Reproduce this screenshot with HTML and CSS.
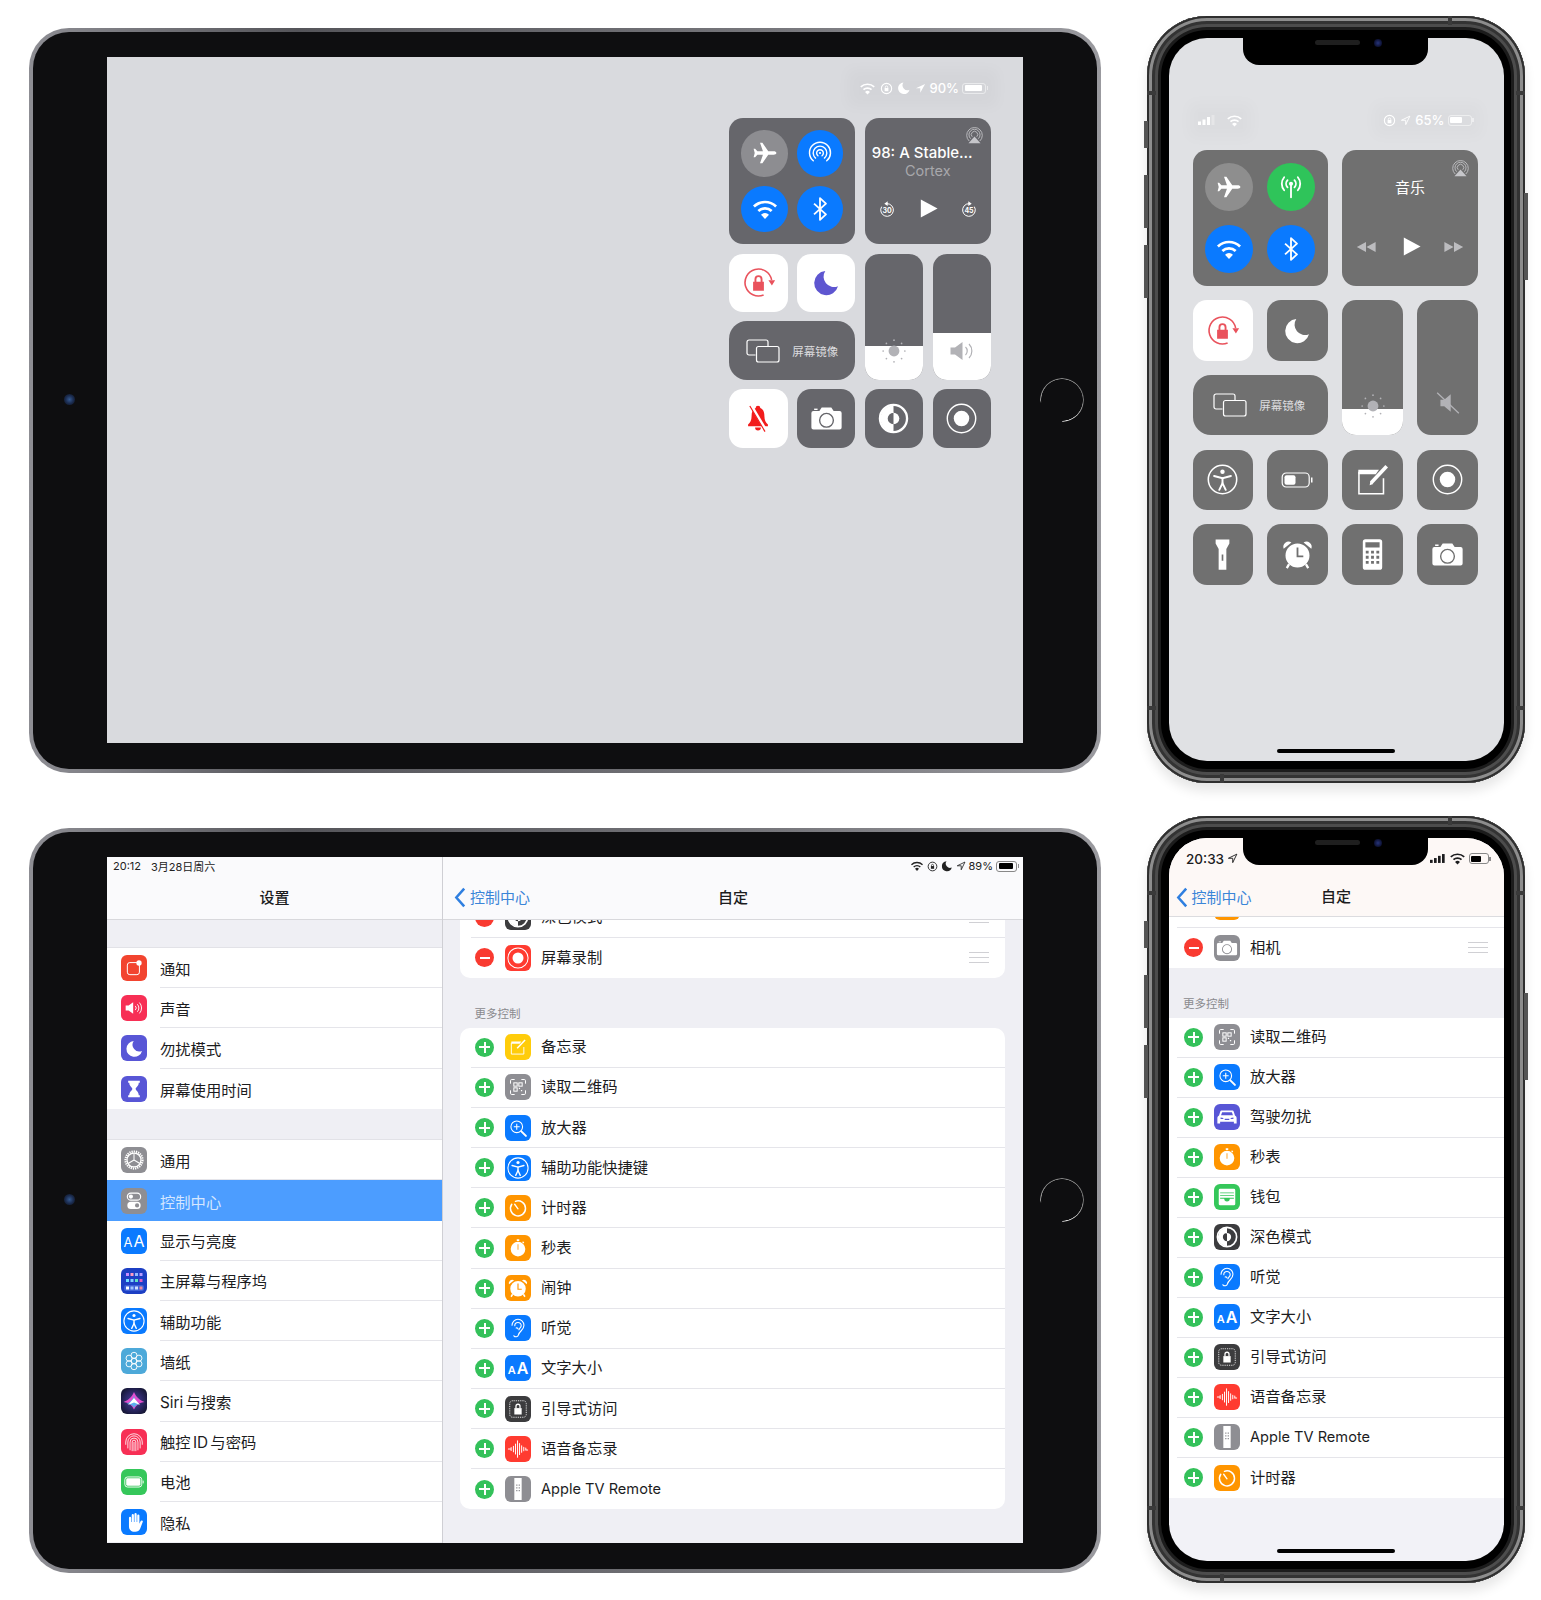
FILE: index.html
```html
<!DOCTYPE html>
<html lang="zh-CN">
<head>
  <meta charset="UTF-8">
  <meta name="viewport" content="width=device-width, initial-scale=1.0">
  <title>控制中心</title>
  <link rel="stylesheet" href="styles.css">
</head>

<body>
  <svg class="sprite" xmlns="http://www.w3.org/2000/svg">
    <symbol id="i-plane" viewBox="0 0 24 24"><path fill="currentColor" d="M22.5 12c0-1-1.2-1.6-2.5-1.6h-5L9.6 2.5H7.4l2.7 7.9H5L2.900 8H1.500l1 4-1 4h1.400L5 13.600h5.100l-2.700 7.900h2.200l5.400-7.900h5c1.300 0 2.500-.6 2.500-1.600z"/></symbol>
    <symbol id="i-airdrop" viewBox="0 0 24 24"><g fill="none" stroke="currentColor" stroke-width="1.300" stroke-linecap="round"><path d="M5.800 19.200A9.700 9.700 0 1 1 18.200 19.200"/><path d="M7.900 16.700A6.300 6.300 0 1 1 16.100 16.700"/><path d="M10.100 14.500A3.100 3.100 0 1 1 13.900 14.500"/></g><circle cx="12" cy="12" r="1" fill="currentColor"/></symbol>
    <symbol id="i-wifi" viewBox="0 0 24 24"><g fill="none" stroke="currentColor" stroke-width="2.300"><path d="M2.500 9.800a13.800 13.800 0 0 1 19 0"/><path d="M6.300 13.700a8.300 8.300 0 0 1 11.400 0"/></g><path fill="currentColor" d="M12 20.500l-3.400-3.600a4.800 4.800 0 0 1 6.800 0z"/></symbol>
    <symbol id="i-bt" viewBox="0 0 24 24"><path fill="none" stroke="currentColor" stroke-width="1.700" stroke-linejoin="round" d="M6.500 7l11 10L12 22V2l5.500 5-11 10"/></symbol>
    <symbol id="i-cell" viewBox="0 0 24 24"><g fill="none" stroke="currentColor" stroke-width="1.700" stroke-linecap="round"><path d="M12 9v12.500"/><path d="M8.800 5.700a4.800 4.800 0 0 0 0 6.600"/><path d="M15.200 5.700a4.800 4.800 0 0 1 0 6.600"/><path d="M5.700 3a9.300 9.300 0 0 0 0 12"/><path d="M18.300 3a9.300 9.300 0 0 1 0 12"/></g><circle cx="12" cy="9" r="1.900" fill="currentColor"/></symbol>
    <symbol id="i-airplay" viewBox="0 0 24 24"><g fill="none" stroke="currentColor" stroke-width="1.200"><path d="M4.500 19.800a11 11 0 1 1 15 0"/><path d="M6.500 16.500a7.800 7.800 0 1 1 11 0"/><path d="M8.800 13.800a4.500 4.500 0 1 1 6.400 0"/></g><path fill="currentColor" d="M12 13.500l8.500 9.500h-17z"/></symbol>
    <symbol id="i-play" viewBox="0 0 24 24"><path fill="currentColor" d="M5 2.500L22.500 12 5 21.500z"/></symbol>
    <symbol id="i-rw" viewBox="0 0 24 24"><path fill="currentColor" d="M12 6.500v11L2 12zM22.500 6.500v11L12.500 12z"/></symbol>
    <symbol id="i-ff" viewBox="0 0 24 24"><path fill="currentColor" d="M1.500 6.500v11l10-5.500zM12 6.500v11l10-5.500z"/></symbol>
    <symbol id="i-back30" viewBox="0 0 24 24"><path fill="none" stroke="currentColor" stroke-width="1.500" d="M12 4a9.500 9.500 0 1 1-8 4.500"/><path fill="currentColor" d="M13 .5v7L8 4z"/></symbol>
    <symbol id="i-fwd45" viewBox="0 0 24 24"><path fill="none" stroke="currentColor" stroke-width="1.500" d="M12 4a9.500 9.500 0 1 0 8 4.500"/><path fill="currentColor" d="M11 .5v7L16 4z"/></symbol>
    <symbol id="i-rotlock" viewBox="0 0 24 24"><path fill="none" stroke="currentColor" stroke-width="1.100" d="M21 10.300A9.200 9.200 0 1 0 15.500 20.500"/><path fill="currentColor" d="M18.800 10.500h4.600L21.200 14zM8.300 11.500h7.400v6.200H8.300z"/><path fill="none" stroke="currentColor" stroke-width="1.300" d="M9.900 11.800V9.700a2.100 2.100 0 0 1 4.200 0v2.100"/></symbol>
    <symbol id="i-moon" viewBox="0 0 24 24"><path fill="currentColor" d="M11 2.500A10 10 0 1 0 21.500 15 8.500 8.500 0 0 1 11 2.500z"/></symbol>
    <symbol id="i-mirror" viewBox="0 0 34 24"><g fill="none" stroke="currentColor" stroke-width="1.200"><path d="M9.500 16H3a2 2 0 0 1-2-2V3a2 2 0 0 1 2-2h17a2 2 0 0 1 2 2v4.500"/><rect x="10.500" y="7.500" width="22.500" height="15.500" rx="2"/></g></symbol>
    <symbol id="i-sun" viewBox="0 0 24 24"><circle cx="12" cy="12" r="5" fill="currentColor"/><g fill="currentColor"><circle cx="12" cy="2" r=".8"/><circle cx="12" cy="22" r=".8"/><circle cx="2" cy="12" r=".8"/><circle cx="22" cy="12" r=".8"/><circle cx="5" cy="5" r=".8"/><circle cx="19" cy="5" r=".8"/><circle cx="5" cy="19" r=".8"/><circle cx="19" cy="19" r=".8"/></g></symbol>
    <symbol id="i-vol" viewBox="0 0 28 20"><path fill="currentColor" d="M0 6.500h4.500L12 1v18l-7.500-5.500H0z"/><g fill="none" stroke="currentColor" stroke-width="1.200"><path d="M15 6a5.500 5.500 0 0 1 0 8"/><path d="M18.500 3a10 10 0 0 1 0 14"/></g></symbol>
    <symbol id="i-mute" viewBox="0 0 24 24"><path fill="currentColor" d="M5 9h3.500l6-5v16l-6-5H5z"/><path fill="none" stroke="currentColor" stroke-width="1.200" d="M2 2.500l20 19"/></symbol>
    <symbol id="i-bell" viewBox="0 0 24 24"><path fill="currentColor" d="M12 1.500a2 2 0 0 0-2 2C7.500 4.500 6.500 7 6.500 10.500c0 3.500-1.200 5.500-3 7V19h17v-1.500c-1.800-1.500-3-3.500-3-7 0-3.500-1-6-3.500-7a2 2 0 0 0-2-2zM9.500 20.200a2.500 2.500 0 0 0 5 0z"/><path fill="none" stroke="#fff" stroke-width="2.600" d="M6 1l13 22"/><path fill="none" stroke="currentColor" stroke-width="1" d="M5 1.700l13 22"/></symbol>
    <symbol id="i-camera" viewBox="0 0 24 24"><path fill="currentColor" fill-rule="evenodd" d="M2.500 6.500h4.300L8.500 4h7l1.700 2.500h4.300a1.500 1.500 0 0 1 1.500 1.500v10.500a1.500 1.500 0 0 1-1.500 1.500h-19A1.500 1.500 0 0 1 1 18.500V8a1.500 1.500 0 0 1 1.500-1.500zM12 7.800a5.500 5.500 0 1 0 0 11 5.500 5.500 0 0 0 0-11zM12 8.800a4.500 4.500 0 1 1 0 9 4.500 4.500 0 0 1 0-9z"/><path fill="currentColor" d="M3 4.800h2.500v1H3z"/></symbol>
    <symbol id="i-contrast" viewBox="0 0 24 24"><circle cx="12" cy="12" r="10.500" fill="none" stroke="currentColor" stroke-width="1.800"/><path fill="currentColor" fill-rule="evenodd" d="M12 2a10 10 0 0 0 0 20zM12 7.500a4.500 4.500 0 0 0 0 9z"/><path fill="currentColor" d="M12 7.500a4.500 4.500 0 0 1 0 9z"/></symbol>
    <symbol id="i-record" viewBox="0 0 24 24"><circle cx="12" cy="12" r="11" fill="none" stroke="currentColor" stroke-width="1.100"/><circle cx="12" cy="12" r="6" fill="currentColor"/></symbol>
    <symbol id="i-access" viewBox="0 0 24 24"><circle cx="12" cy="12" r="11" fill="none" stroke="currentColor" stroke-width="1.200"/><circle cx="12" cy="6" r="1.700" fill="currentColor"/><g fill="none" stroke="currentColor" stroke-width="1.500" stroke-linecap="round"><path d="M5.500 9.300L12 11l6.500-1.700"/><path d="M12 11v3.800"/><path d="M9.500 20l2.500-5.200 2.500 5.200"/></g></symbol>
    <symbol id="i-lowbat" viewBox="0 0 32 16"><rect x=".7" y="1" width="27" height="14" rx="4" fill="none" stroke="currentColor" stroke-width="1.200"/><rect x="3" y="3.200" width="11" height="9.600" rx="2" fill="currentColor"/><rect x="29.500" y="5.500" width="1.500" height="5" fill="currentColor"/></symbol>
    <symbol id="i-note" viewBox="0 0 24 24"><path fill="none" stroke="currentColor" stroke-width="1.200" d="M1.500 6v17h19V11"/><path fill="currentColor" d="M1 4.500h16L14.500 8H1z"/><path fill="none" stroke="currentColor" stroke-width="2.800" d="M23 1.800L11 14.500"/><path fill="currentColor" d="M9.800 16.500l.5-3 2.300 2z"/></symbol>
    <symbol id="i-flash" viewBox="0 0 24 24"><path fill="currentColor" fill-rule="evenodd" d="M7 1h10v3l-2.200 4v15H9.200V8L7 4zM11.400 12v4.500h1.200V12z"/></symbol>
    <symbol id="i-alarm" viewBox="0 0 24 24"><path fill="currentColor" fill-rule="evenodd" d="M12 3.500a9.300 9.300 0 1 0 0 18.600 9.300 9.300 0 0 0 0-18.600zM11.300 6.500h1.400v6.300h3.800v1.400h-5.200z"/><path fill="currentColor" d="M1.300 7.500a4 4 0 0 1 6-4.700zM22.700 7.500a4 4 0 0 0-6-4.700z"/><path fill="none" stroke="currentColor" stroke-width="1.800" d="M5.500 19.500l-1.800 3M18.500 19.500l1.800 3"/></symbol>
    <symbol id="i-calc" viewBox="0 0 24 24"><path fill="currentColor" fill-rule="evenodd" d="M4.500 2.200a2 2 0 0 1 2-2h11a2 2 0 0 1 2 2v19.600a2 2 0 0 1-2 2h-11a2 2 0 0 1-2-2zM6.500 2.500V6.500h11V2.500zM6.800 9v2.200h2.200V9zM10.900 9v2.200h2.200V9zM15 9v2.200h2.200V9zM6.800 13v2.200h2.200V13zM10.900 13v2.200h2.200V13zM15 13v2.200h2.200V13zM6.800 17v2.200h2.200V17zM10.900 17v2.200h2.200V17zM15 17v2.200h2.200V17z"/></symbol>
    <symbol id="i-loc" viewBox="0 0 24 24"><path fill="currentColor" d="M22 2L2 11.500h9.500V21z"/></symbol>
    <symbol id="i-loc-line" viewBox="0 0 24 24"><path fill="none" stroke="currentColor" stroke-width="2" stroke-linejoin="round" d="M21.500 2.500L3 11.500h9.500V21z"/></symbol>
    <symbol id="i-lockring" viewBox="0 0 24 24"><circle cx="12" cy="12" r="9.500" fill="none" stroke="currentColor" stroke-width="2"/><path fill="currentColor" d="M8.500 11h7v6h-7z"/><path fill="none" stroke="currentColor" stroke-width="1.500" d="M9.800 11V9.500a2.200 2.200 0 0 1 4.400 0V11"/></symbol>
    <symbol id="a-notif" viewBox="0 0 24 24"><rect x="4" y="5.500" width="14.500" height="14.500" rx="3" fill="none" stroke="currentColor" stroke-width="1.200"/><circle cx="18" cy="6" r="3.200" fill="currentColor"/></symbol>
    <symbol id="a-sound" viewBox="0 0 24 24"><path fill="currentColor" d="M2 9h3.500L11 5v14l-5.500-4H2z"/><g fill="none" stroke="currentColor" stroke-width="1.100"><path d="M13.500 9.500a3.500 3.500 0 0 1 0 5"/><path d="M16 7.500a6.500 6.500 0 0 1 0 9"/><path d="M18.500 5.500a9.500 9.500 0 0 1 0 13"/></g></symbol>
    <symbol id="a-hour" viewBox="0 0 24 24"><path fill="currentColor" d="M5 2h14v2.600h-1.300c0 4.200-3.700 5.600-3.700 7.400s3.700 3.200 3.700 7.400H19V22H5v-2.600h1.300c0-4.200 3.700-5.600 3.700-7.400S6.300 8.800 6.300 4.600H5z"/></symbol>
    <symbol id="a-gear" viewBox="0 0 24 24"><circle cx="12" cy="12" r="9.300" fill="none" stroke="currentColor" stroke-width="2.400" stroke-dasharray="1.400 1"/><circle cx="12" cy="12" r="7.600" fill="none" stroke="currentColor" stroke-width="1.400"/><path fill="none" stroke="currentColor" stroke-width="1.100" d="M12 12V5M12 12l6 3.500M12 12l-6 3.500"/></symbol>
    <symbol id="a-toggle" viewBox="0 0 24 24"><rect x="4" y="2.500" width="16" height="8.500" rx="4.250" fill="none" stroke="currentColor" stroke-width="1.400"/><circle cx="8.300" cy="6.700" r="2.500" fill="currentColor"/><path fill="currentColor" fill-rule="evenodd" d="M8.250 13h7.500a4.250 4.250 0 0 1 0 8.500h-7.500a4.250 4.250 0 0 1 0-8.500zM15.700 14.800a2.500 2.500 0 1 0 0 5 2.500 2.500 0 0 0 0-5z"/></symbol>
    <symbol id="a-dock" viewBox="0 0 26 26"><rect x="5" y="5" width="3" height="3" fill="#c88bff"/><rect x="9.500" y="5" width="3" height="3" fill="#ff9ac0"/><rect x="14" y="5" width="3" height="3" fill="#8fb8ff"/><rect x="18.500" y="5" width="3" height="3" fill="#b99cff"/><rect x="5" y="11" width="3" height="3" fill="#6fe0ff"/><rect x="9.500" y="11" width="3" height="3" fill="#7fd0ff"/><rect x="14" y="11" width="3" height="3" fill="#5fe0c0"/><rect x="18.500" y="11" width="3" height="3" fill="#e060c0"/><rect x="3" y="17" width="20" height="6" rx="2" fill="#3e62d8"/><rect x="5" y="18.500" width="3" height="3" fill="#fff"/><rect x="9.500" y="18.500" width="3" height="3" fill="#9fc4ff"/><rect x="14" y="18.500" width="3" height="3" fill="#d0e0ff"/><rect x="18.500" y="18.500" width="3" height="3" fill="#f08aa0"/></symbol>
    <symbol id="a-flower" viewBox="0 0 24 24"><g fill="none" stroke="currentColor" stroke-width="1"><circle cx="12" cy="12" r="3"/><circle cx="12" cy="5.800" r="3.300"/><circle cx="12" cy="18.200" r="3.300"/><circle cx="6.600" cy="8.900" r="3.300"/><circle cx="17.400" cy="8.900" r="3.300"/><circle cx="6.600" cy="15.100" r="3.300"/><circle cx="17.400" cy="15.100" r="3.300"/></g></symbol>
    <symbol id="a-siri" viewBox="0 0 26 26"><path fill="#e14fd0" d="M13 4c2 5 6 8.500 10.500 10-5 .5-8.500 3-10.500 7.500C11 17 7.500 14.500 2.500 14 7 12.500 11 9 13 4z"/><path fill="#38c6f4" d="M13 8c-1.500 4-4 6.500-7.500 7.500 3.200.2 5.700 1.500 7.500 4 1.800-2.500 3.500-3 5-3.500-2.500-1.500-4-4-5-8z" opacity=".8"/><path fill="#fff" d="M13 10l-6 7 6-2.500 6 2.500z"/></symbol>
    <symbol id="a-finger" viewBox="0 0 24 24"><g fill="none" stroke="currentColor" stroke-width=".9"><path d="M3 15V12a9 9 0 0 1 18 0v3"/><path d="M5.300 19V12a6.700 6.700 0 0 1 13.400 0v7"/><path d="M7.700 21V12a4.300 4.300 0 0 1 8.600 0v9"/><path d="M10 22V12a2 2 0 0 1 4 0v10"/><path d="M12 12v10"/></g></symbol>
    <symbol id="a-bat" viewBox="0 0 24 24"><rect x="2" y="6.500" width="18.500" height="11" rx="3" fill="none" stroke="currentColor" stroke-width="1"/><rect x="3.500" y="8" width="15.500" height="8" rx="1.500" fill="currentColor"/><rect x="21.500" y="10.500" width="1" height="3" fill="currentColor"/></symbol>
    <symbol id="a-hand" viewBox="0 0 24 24"><path fill="currentColor" d="M6.500 7.500a1.200 1.200 0 0 1 2.400 0V12h.6V4.500a1.200 1.200 0 0 1 2.400 0V12h.6V3.500a1.200 1.200 0 0 1 2.400 0V12h.6V5a1.200 1.200 0 0 1 2.400 0v9l1.400-3a1.200 1.200 0 0 1 2.200 1l-2.700 7c-1 2.500-3 3.500-5.300 3.500h-1c-3.500 0-6-2-6-6z"/></symbol>
    <symbol id="a-qr" viewBox="0 0 24 24"><g fill="none" stroke="currentColor" stroke-width="1.200"><path d="M3 8V4.500A1.500 1.500 0 0 1 4.500 3H8M16 3h3.500A1.500 1.500 0 0 1 21 4.500V8M21 16v3.500a1.500 1.500 0 0 1-1.500 1.500H16M8 21H4.500A1.500 1.500 0 0 1 3 19.500V16"/><rect x="7" y="7" width="4" height="4"/><rect x="13" y="7" width="4" height="4"/><rect x="7" y="13" width="4" height="4"/></g><path fill="currentColor" d="M13 13h1.500v1.500H13zM15.500 15.500H17V17h-1.500z"/></symbol>
    <symbol id="a-mag" viewBox="0 0 24 24"><g fill="none" stroke="currentColor" stroke-width="1.300"><circle cx="10.500" cy="10.500" r="7"/><path d="M10.500 7v7M7 10.500h7"/></g><path fill="none" stroke="currentColor" stroke-width="2.400" stroke-linecap="round" d="M16 16l5.500 5.500"/></symbol>
    <symbol id="a-timer" viewBox="0 0 24 24"><g fill="none" stroke="currentColor" stroke-width="1.800" stroke-linecap="round"><path d="M9 4a9 9 0 1 1-4.500 3.500"/><path d="M12 13L8 7.500" stroke-width="1.600"/></g></symbol>
    <symbol id="a-stop" viewBox="0 0 24 24"><path fill="currentColor" fill-rule="evenodd" d="M12 4.500a8.800 8.800 0 1 0 0 17.600 8.800 8.800 0 0 0 0-17.600zM11.500 7.500h1v6.500h-1z"/><path fill="currentColor" d="M10.500 1.500h3v2h-3zM18 4l1.500 1.500-1 1-1.500-1.500z"/></symbol>
    <symbol id="a-ear" viewBox="0 0 24 24"><g fill="none" stroke="currentColor" stroke-width="1.200" stroke-linecap="round"><path d="M7.500 20.500c1.500 1.800 4.500 1.300 5-1 .5-2 1.500-3 3-4.500 2-2 3-3.500 3-6a6.500 6.500 0 0 0-13 0"/><path d="M8.500 9.500a3.500 3.500 0 0 1 7 0c0 2-2 2.500-2.500 4.500"/><path d="M10 12a1.500 1.500 0 0 1 2 1"/></g></symbol>
    <symbol id="a-guided" viewBox="0 0 24 24"><rect x="3" y="3" width="18" height="18" rx="3" fill="none" stroke="currentColor" stroke-width="1" stroke-dasharray="1 1"/><path fill="currentColor" d="M8 11h8v7H8z"/><path fill="none" stroke="currentColor" stroke-width="1.400" d="M9.800 11V9a2.200 2.200 0 0 1 4.400 0v2"/></symbol>
    <symbol id="a-wave" viewBox="0 0 24 24"><path fill="none" stroke="currentColor" stroke-width="1.100" stroke-linecap="round" d="M1.500 12h2M4.500 10.500v3M7 9v6M9.300 6.500v11M11.500 3v18M13.700 6v12M16 8.500v7M18.300 10v4M20.500 11v2h2"/></symbol>
    <symbol id="a-remote" viewBox="0 0 24 24"><path fill="currentColor" fill-rule="evenodd" d="M8 0h8v24H8zM10 7v1.400h1.400V7zM12.700 7v1.400h1.400V7zM10 10v1.400h1.400V10zM12.700 10v1.400h1.400V10zM10 13v1.400h1.400V13zM12.700 13v1.400h1.400V13z"/></symbol>
    <symbol id="a-car" viewBox="0 0 24 24"><path fill="currentColor" fill-rule="evenodd" d="M6.500 5h11c1 0 1.700.5 2 1.500l1.200 3.800c1 .5 1.800 1.400 1.800 2.700V19h-3v-1.700H4.500V19h-3v-6c0-1.300.8-2.200 1.800-2.700l1.200-3.800C4.800 5.500 5.500 5 6.500 5zM6.700 6.700L5.500 10h13l-1.200-3.300zM5 12.500v1.700h3v-1zM19 12.500l-3 .7v1h3zM9.500 14v1.200h5V14z"/></symbol>
    <symbol id="a-wallet" viewBox="0 0 24 24"><path fill="currentColor" fill-rule="evenodd" d="M4.500 3h15A1.500 1.500 0 0 1 21 4.500v15a1.500 1.500 0 0 1-1.500 1.500h-15A1.500 1.500 0 0 1 3 19.500v-15A1.500 1.500 0 0 1 4.500 3zM4.500 7v1h15V7zM4.500 10v.8h15V10zM4.500 12.800V14H9a3 3 0 0 0 6 0h4.500v-1.200z"/></symbol>
    <symbol id="a-note" viewBox="0 0 24 24"><path fill="none" stroke="currentColor" stroke-width="1.100" d="M4 7v13.500h15V12"/><path fill="currentColor" d="M4 5.500h12L14 8H4z"/><path fill="none" stroke="currentColor" stroke-width="1.800" d="M20.500 3.500L11 13.500"/></symbol>
  </svg>

  <main class="gallery">
    <section class="ipad">
      <span class="ipad-cam"></span>
      <span class="ipad-home"></span>
      <div class="screen-cc">
        <div class="cc-status cc-status-pad">
          <svg class="st-wifi"><use href="#i-wifi"/></svg>
          <svg class="st-lock"><use href="#i-lockring"/></svg>
          <svg class="st-moon"><use href="#i-moon"/></svg>
          <svg class="st-loc"><use href="#i-loc"/></svg>
          <span class="st-pct">90%</span>
          <span class="batt batt-cc"><i style="width: 90%"></i></span>
        </div>
        <div class="cc-grid">
          <div class="conn">
            <span class="round round-off"><svg><use href="#i-plane"/></svg></span>
            <span class="round round-blue"><svg><use href="#i-airdrop"/></svg></span>
            <span class="round round-blue"><svg class="ic-wifi"><use href="#i-wifi"/></svg></span>
            <span class="round round-blue"><svg><use href="#i-bt"/></svg></span>
          </div>
          <div class="media">
            <svg class="airplay"><use href="#i-airplay"/></svg>
            <div class="media-title">98: A Stable...</div>
            <div class="media-sub">Cortex</div>
            <div class="media-ctl">
              <svg class="skip" viewBox="0 0 24 24"><use href="#i-back30"/><text x="12" y="17.500" class="skip-n">30</text></svg>
              <svg class="play"><use href="#i-play"/></svg>
              <svg class="skip" viewBox="0 0 24 24"><use href="#i-fwd45"/><text x="12" y="17.500" class="skip-n">45</text></svg>
            </div>
          </div>
          <div class="tile tile-on tile-red"><svg class="ic-rot"><use href="#i-rotlock"/></svg></div>
          <div class="tile tile-on tile-violet"><svg class="ic-moon"><use href="#i-moon"/></svg></div>
          <div class="slider">
            <i class="slider-fill" style="height: 34px"></i>
            <svg class="slider-sun"><use href="#i-sun"/></svg>
          </div>
          <div class="slider">
            <i class="slider-fill" style="height: 47px"></i>
            <svg class="slider-vol"><use href="#i-vol"/></svg>
          </div>
          <div class="tile mirror"><svg><use href="#i-mirror"/></svg><span>屏幕镜像</span></div>
          <div class="tile tile-on tile-bell"><svg class="ic-bell"><use href="#i-bell"/></svg></div>
          <div class="tile"><svg class="ic-cam"><use href="#i-camera"/></svg></div>
          <div class="tile"><svg class="ic-30"><use href="#i-contrast"/></svg></div>
          <div class="tile"><svg class="ic-30"><use href="#i-record"/></svg></div>
        </div>
      </div>
    </section>

    <section class="iphone">
      <span class="side side-mute"></span><span class="side side-up"></span><span class="side side-down"></span><span class="side side-power"></span>
      <span class="seam seam-top"></span><span class="seam seam-lt"></span><span class="seam seam-rt"></span><span class="seam seam-lb"></span><span class="seam seam-rb"></span><span class="seam seam-bottom"></span>
      <div class="phone-screen phone-cc">
        <div class="notch"><span class="speaker"></span><span class="lens"></span></div>
        <div class="cc-status phone-status">
          <div class="phone-status-l">
            <svg class="signal" viewBox="0 0 18 10"><rect x="0" y="6.500" width="3" height="3.500" fill="#fff"/><rect x="4.500" y="4.500" width="3" height="5.500" fill="#fff"/><rect x="9" y="2" width="3" height="8" fill="#fff"/><rect x="13.500" y="0" width="3" height="10" fill="#fff" opacity=".3"/></svg>
            <svg class="st-wifi"><use href="#i-wifi"/></svg>
          </div>
          <div class="phone-status-r">
            <svg class="st-lock"><use href="#i-lockring"/></svg>
            <svg class="st-loc"><use href="#i-loc-line"/></svg>
            <span class="st-pct">65%</span>
            <span class="batt batt-cc"><i style="width: 65%"></i></span>
          </div>
        </div>
        <div class="cc-grid cc-grid-phone">
          <div class="conn">
            <span class="round round-off"><svg><use href="#i-plane"/></svg></span>
            <span class="round round-green"><svg><use href="#i-cell"/></svg></span>
            <span class="round round-blue"><svg class="ic-wifi"><use href="#i-wifi"/></svg></span>
            <span class="round round-blue"><svg><use href="#i-bt"/></svg></span>
          </div>
          <div class="media media-phone">
            <svg class="airplay"><use href="#i-airplay"/></svg>
            <div class="media-head">音乐</div>
            <div class="media-ctl">
              <svg class="seek"><use href="#i-rw"/></svg>
              <svg class="play"><use href="#i-play"/></svg>
              <svg class="seek"><use href="#i-ff"/></svg>
            </div>
          </div>
          <div class="tile tile-on tile-red"><svg class="ic-rot"><use href="#i-rotlock"/></svg></div>
          <div class="tile"><svg class="ic-moon"><use href="#i-moon"/></svg></div>
          <div class="slider">
            <i class="slider-fill" style="height: 26px"></i>
            <svg class="slider-sun"><use href="#i-sun"/></svg>
          </div>
          <div class="slider">
            <svg class="slider-mute"><use href="#i-mute"/></svg>
          </div>
          <div class="tile mirror"><svg><use href="#i-mirror"/></svg><span>屏幕镜像</span></div>
          <div class="tile"><svg class="ic-30"><use href="#i-access"/></svg></div>
          <div class="tile"><svg class="ic-lowbat"><use href="#i-lowbat"/></svg></div>
          <div class="tile"><svg class="ic-30"><use href="#i-note"/></svg></div>
          <div class="tile"><svg class="ic-30"><use href="#i-record"/></svg></div>
          <div class="tile"><svg class="ic-32"><use href="#i-flash"/></svg></div>
          <div class="tile"><svg class="ic-30"><use href="#i-alarm"/></svg></div>
          <div class="tile"><svg class="ic-30"><use href="#i-calc"/></svg></div>
          <div class="tile"><svg class="ic-cam"><use href="#i-camera"/></svg></div>
        </div>
        <span class="home-bar"></span>
      </div>
    </section>

    <section class="ipad">
      <span class="ipad-cam"></span>
      <span class="ipad-home"></span>
      <div class="screen-split">
        <aside class="master">
          <header class="nav">
            <div class="nav-status"><span>20:12</span><span>3月28日周六</span></div>
            <div class="nav-bar"><span class="nav-title">设置</span></div>
          </header>
          <div class="master-list">
            <ul class="group">
              <li class="item"><span class="app c-notif"><svg><use href="#a-notif"/></svg></span><span class="item-label">通知</span></li>
              <li class="item"><span class="app c-pink"><svg><use href="#a-sound"/></svg></span><span class="item-label">声音</span></li>
              <li class="item"><span class="app c-indigo"><svg class="app-moon"><use href="#i-moon"/></svg></span><span class="item-label">勿扰模式</span></li>
              <li class="item"><span class="app c-indigo"><svg><use href="#a-hour"/></svg></span><span class="item-label">屏幕使用时间</span></li>
            </ul>
            <ul class="group">
              <li class="item"><span class="app c-gray"><svg class="app-lg"><use href="#a-gear"/></svg></span><span class="item-label">通用</span></li>
              <li class="item item-active"><span class="app c-gray"><svg><use href="#a-toggle"/></svg></span><span class="item-label">控制中心</span></li>
              <li class="item"><span class="app c-blue"><span class="aa aa-thin"><small>A</small>A</span></span><span class="item-label">显示与亮度</span></li>
              <li class="item"><span class="app c-dock"><svg class="app-full"><use href="#a-dock"/></svg></span><span class="item-label">主屏幕与程序坞</span></li>
              <li class="item"><span class="app c-blue"><svg class="app-lg"><use href="#i-access"/></svg></span><span class="item-label">辅助功能</span></li>
              <li class="item"><span class="app c-sky"><svg class="app-lg"><use href="#a-flower"/></svg></span><span class="item-label">墙纸</span></li>
              <li class="item"><span class="app c-siri"><svg class="app-full"><use href="#a-siri"/></svg></span><span class="item-label">Siri 与搜索</span></li>
              <li class="item"><span class="app c-pink"><svg class="app-lg"><use href="#a-finger"/></svg></span><span class="item-label">触控 ID 与密码</span></li>
              <li class="item"><span class="app c-green"><svg class="app-lg"><use href="#a-bat"/></svg></span><span class="item-label">电池</span></li>
              <li class="item"><span class="app c-blue"><svg class="app-lg"><use href="#a-hand"/></svg></span><span class="item-label">隐私</span></li>
            </ul>
          </div>
        </aside>
        <div class="detail">
          <header class="nav">
            <div class="nav-status nav-status-r">
              <svg class="st-wifi"><use href="#i-wifi"/></svg>
              <svg class="st-lock"><use href="#i-lockring"/></svg>
              <svg class="st-moon"><use href="#i-moon"/></svg>
              <svg class="st-loc"><use href="#i-loc-line"/></svg>
              <span>89%</span>
              <span class="batt batt-dark"><i style="width: 89%"></i></span>
            </div>
            <div class="nav-bar">
              <a class="back"><svg viewBox="0 0 11 20"><path d="M9.500 1.500L2 10l7.500 8.500"/></svg>控制中心</a>
              <span class="nav-title">自定</span>
            </div>
          </header>
          <div class="detail-list">
            <ul class="card card-clip">
              <li class="row"><span class="ctl ctl-del"></span><span class="app c-dark"><svg class="app-lg"><use href="#i-contrast"/></svg></span><span class="row-label">深色模式</span><span class="grip"></span></li>
              <li class="row"><span class="ctl ctl-del"></span><span class="app c-red"><svg class="app-lg"><use href="#i-record"/></svg></span><span class="row-label">屏幕录制</span><span class="grip"></span></li>
            </ul>
            <h2 class="more">更多控制</h2>
            <ul class="card">
              <li class="row"><span class="ctl ctl-add"></span><span class="app c-yellow"><svg><use href="#a-note"/></svg></span><span class="row-label">备忘录</span></li>
              <li class="row"><span class="ctl ctl-add"></span><span class="app c-gray"><svg><use href="#a-qr"/></svg></span><span class="row-label">读取二维码</span></li>
              <li class="row"><span class="ctl ctl-add"></span><span class="app c-blue"><svg><use href="#a-mag"/></svg></span><span class="row-label">放大器</span></li>
              <li class="row"><span class="ctl ctl-add"></span><span class="app c-blue"><svg class="app-lg"><use href="#i-access"/></svg></span><span class="row-label">辅助功能快捷键</span></li>
              <li class="row"><span class="ctl ctl-add"></span><span class="app c-orange"><svg><use href="#a-timer"/></svg></span><span class="row-label">计时器</span></li>
              <li class="row"><span class="ctl ctl-add"></span><span class="app c-orange"><svg><use href="#a-stop"/></svg></span><span class="row-label">秒表</span></li>
              <li class="row"><span class="ctl ctl-add"></span><span class="app c-orange"><svg><use href="#i-alarm"/></svg></span><span class="row-label">闹钟</span></li>
              <li class="row"><span class="ctl ctl-add"></span><span class="app c-blue"><svg class="app-lg"><use href="#a-ear"/></svg></span><span class="row-label">听觉</span></li>
              <li class="row"><span class="ctl ctl-add"></span><span class="app c-blue"><span class="aa"><small>A</small>A</span></span><span class="row-label">文字大小</span></li>
              <li class="row"><span class="ctl ctl-add"></span><span class="app c-dark"><svg class="app-lg"><use href="#a-guided"/></svg></span><span class="row-label">引导式访问</span></li>
              <li class="row"><span class="ctl ctl-add"></span><span class="app c-red"><svg class="app-lg"><use href="#a-wave"/></svg></span><span class="row-label">语音备忘录</span></li>
              <li class="row"><span class="ctl ctl-add"></span><span class="app c-gray"><svg class="app-lg"><use href="#a-remote"/></svg></span><span class="row-label latin">Apple TV Remote</span></li>
            </ul>
          </div>
        </div>
      </div>
    </section>

    <section class="iphone">
      <span class="side side-mute"></span><span class="side side-up"></span><span class="side side-down"></span><span class="side side-power"></span>
      <span class="seam seam-top"></span><span class="seam seam-lt"></span><span class="seam seam-rt"></span><span class="seam seam-lb"></span><span class="seam seam-rb"></span><span class="seam seam-bottom"></span>
      <div class="phone-screen phone-settings">
        <div class="notch"><span class="speaker"></span><span class="lens"></span></div>
        <header class="nav nav-phone">
          <div class="phone-bar">
            <div class="phone-time"><span>20:33</span><svg class="st-loc"><use href="#i-loc-line"/></svg></div>
            <div class="phone-icons">
              <svg class="signal" viewBox="0 0 18 10"><rect x="0" y="6.500" width="3" height="3.500"/><rect x="4.500" y="4.500" width="3" height="5.500"/><rect x="9" y="2" width="3" height="8"/><rect x="13.500" y="0" width="3" height="10"/></svg>
              <svg class="st-wifi"><use href="#i-wifi"/></svg>
              <span class="batt batt-dark"><i style="width: 65%"></i></span>
            </div>
          </div>
          <div class="nav-bar">
            <a class="back"><svg viewBox="0 0 11 20"><path d="M9.500 1.500L2 10l7.500 8.500"/></svg>控制中心</a>
            <span class="nav-title">自定</span>
          </div>
        </header>
        <div class="detail-list detail-list-phone">
          <ul class="card card-clip">
            <li class="row"><span class="ctl ctl-del"></span><span class="app c-orange"></span><span class="row-label"></span></li>
            <li class="row"><span class="ctl ctl-del"></span><span class="app c-gray"><svg class="app-lg"><use href="#i-camera"/></svg></span><span class="row-label">相机</span><span class="grip"></span></li>
          </ul>
          <h2 class="more">更多控制</h2>
          <ul class="card">
            <li class="row"><span class="ctl ctl-add"></span><span class="app c-gray"><svg><use href="#a-qr"/></svg></span><span class="row-label">读取二维码</span></li>
            <li class="row"><span class="ctl ctl-add"></span><span class="app c-blue"><svg><use href="#a-mag"/></svg></span><span class="row-label">放大器</span></li>
            <li class="row"><span class="ctl ctl-add"></span><span class="app c-indigo"><svg class="app-lg"><use href="#a-car"/></svg></span><span class="row-label">驾驶勿扰</span></li>
            <li class="row"><span class="ctl ctl-add"></span><span class="app c-orange"><svg><use href="#a-stop"/></svg></span><span class="row-label">秒表</span></li>
            <li class="row"><span class="ctl ctl-add"></span><span class="app c-green"><svg class="app-lg"><use href="#a-wallet"/></svg></span><span class="row-label">钱包</span></li>
            <li class="row"><span class="ctl ctl-add"></span><span class="app c-dark"><svg class="app-lg"><use href="#i-contrast"/></svg></span><span class="row-label">深色模式</span></li>
            <li class="row"><span class="ctl ctl-add"></span><span class="app c-blue"><svg class="app-lg"><use href="#a-ear"/></svg></span><span class="row-label">听觉</span></li>
            <li class="row"><span class="ctl ctl-add"></span><span class="app c-blue"><span class="aa"><small>A</small>A</span></span><span class="row-label">文字大小</span></li>
            <li class="row"><span class="ctl ctl-add"></span><span class="app c-dark"><svg class="app-lg"><use href="#a-guided"/></svg></span><span class="row-label">引导式访问</span></li>
            <li class="row"><span class="ctl ctl-add"></span><span class="app c-red"><svg class="app-lg"><use href="#a-wave"/></svg></span><span class="row-label">语音备忘录</span></li>
            <li class="row"><span class="ctl ctl-add"></span><span class="app c-gray"><svg class="app-lg"><use href="#a-remote"/></svg></span><span class="row-label latin">Apple TV Remote</span></li>
            <li class="row"><span class="ctl ctl-add"></span><span class="app c-orange"><svg><use href="#a-timer"/></svg></span><span class="row-label">计时器</span></li>
          </ul>
        </div>
        <span class="home-bar"></span>
      </div>
    </section>
  </main>
</body>
</html>
```

FILE: styles.css
```css
* {
  box-sizing: border-box;
}
body {
  margin: 0;
  background-color: #fff;
  color: #1c1c1e;
  font-family: Inter, "Noto Sans CJK SC", sans-serif;
}
ul {
  margin: 0;
  padding: 0;
  list-style: none;
}
svg {
  display: block;
  fill: currentColor;
}
.sprite {
  display: none;
}
.gallery {
  width: 1541px;
  height: 1600px;
  overflow: hidden;
  display: grid;
  grid-template-columns: 1118px 1fr;
  grid-auto-rows: 800px;
}

/* iPad body */
.ipad {
  position: relative;
  width: 1072px;
  height: 745px;
  margin: 28px 0 0 29px;
  padding: 25px 74px 26px;
  border: 4px solid transparent;
  border-radius: 40px;
  background:
    linear-gradient(#0e0e10, #0e0e10) padding-box,
    linear-gradient(90deg, #8e8e94, #55555a 25%, #77777c 70%, #9a9a9f) border-box;
}
.ipad-cam {
  position: absolute;
  left: 31px;
  top: 362px;
  width: 11px;
  height: 11px;
  border-radius: 50%;
  background: radial-gradient(circle, #35598f 0, #1b2c50 50%, #0d1018 100%);
}
.ipad-home {
  position: absolute;
  right: 13px;
  top: 346px;
  width: 44px;
  height: 44px;
  border-radius: 50%;
  background: conic-gradient(#8a8a8a 0deg, #6c6c6c 70deg, #8f8f8f 120deg, #e8e8e8 178deg, transparent 180deg, transparent 262deg, #9a9a9a 268deg, #777 320deg, #8a8a8a 360deg);
  -webkit-mask: radial-gradient(circle, transparent 20.5px, #000 21px);
  mask: radial-gradient(circle, transparent 20.5px, #000 21px);
}

/* control center, shared by both devices */
.screen-cc {
  height: 100%;
  padding: 24px 32px 0 0;
  background-color: #d9dade;
  display: flex;
  flex-direction: column;
  align-items: flex-end;
}
.cc-status {
  display: flex;
  align-items: center;
  gap: 4px;
  height: 14px;
  color: #fff;
  background-color: rgba(0, 0, 0, 0.025);
  box-shadow: 0 0 14px 12px rgba(0, 0, 0, 0.025);
}
.cc-status-pad {
  margin-right: 5px;
}
.st-wifi {
  width: 17px;
  height: 17px;
}
.st-lock {
  width: 13px;
  height: 13px;
}
.st-moon {
  width: 14px;
  height: 14px;
}
.st-loc {
  width: 11px;
  height: 11px;
}
.st-pct {
  font-size: 13px;
  font-weight: 500;
  line-height: 14px;
  margin-right: -1px;
}
.batt {
  display: block;
  position: relative;
  width: 21px;
  height: 11px;
  padding: 1.5px;
  border-radius: 3px;
  border: 1px solid currentColor;
}
.batt::after {
  content: "";
  position: absolute;
  right: -3px;
  top: 2.500px;
  width: 1.500px;
  height: 4px;
  background-color: currentColor;
  opacity: 0.5;
}
.batt i {
  display: block;
  height: 100%;
  border-radius: 1px;
  background-color: currentColor;
}
.batt-cc {
  width: 24px;
  border-color: rgba(255, 255, 255, 0.5);
}
.cc-grid {
  display: grid;
  grid-template-columns: repeat(4, 58.5px);
  grid-auto-rows: 58.5px;
  gap: 9.3px;
  margin-top: 23px;
  color: #fff;
}
.cc-grid > * {
  background-color: #66666b;
  border-radius: 14px;
}
.conn {
  grid-column: span 2;
  grid-row: span 2;
  display: grid;
  grid-template-columns: 46.5px 46.5px;
  justify-content: center;
  align-content: center;
  gap: 9px;
}
.round {
  height: 46.500px;
  border-radius: 50%;
  display: flex;
  align-items: center;
  justify-content: center;
}
.round svg {
  width: 26px;
  height: 26px;
}
.round .ic-wifi {
  width: 28px;
  height: 28px;
}
.round-off {
  background-color: #8d8d91;
}
.round-blue {
  background-color: #0a7aff;
}
.round-green {
  background-color: #2fc45a;
}
.media {
  position: relative;
  grid-column: span 2;
  grid-row: span 2;
  padding-top: 26px;
  text-align: center;
}
.airplay {
  position: absolute;
  top: 9px;
  right: 8px;
  width: 17px;
  height: 17px;
  color: #c6c6ca;
}
.media-title {
  padding-left: 7px;
  font-size: 15px;
  font-weight: 500;
  line-height: 18px;
  text-align: left;
  white-space: nowrap;
}
.media-sub {
  font-size: 14.500px;
  line-height: 18px;
  color: #a8a8ac;
}
.media-head {
  font-size: 15px;
  line-height: 22px;
  padding-top: 2px;
}
.media-ctl {
  display: flex;
  align-items: center;
  justify-content: space-between;
  margin-top: 17px;
  padding: 0 14px;
}
.skip {
  width: 16px;
  height: 16px;
  overflow: visible;
}
.skip-n {
  font-size: 10.500px;
  font-weight: 700;
  text-anchor: middle;
}
.play {
  width: 23px;
  height: 23px;
}
.seek {
  width: 22px;
  height: 22px;
  color: #bcbcbf;
}
.tile {
  display: flex;
  align-items: center;
  justify-content: center;
}
.tile-on {
  background-color: #fff !important;
}
.tile-red {
  color: #e9525c;
}
.tile-violet {
  color: #5e56d0;
}
.tile-bell {
  color: #f21c1c;
}
.ic-30 {
  width: 31px;
  height: 31px;
}
.ic-32 {
  width: 33px;
  height: 33px;
}
.ic-rot {
  width: 35px;
  height: 35px;
}
.ic-cam {
  width: 33px;
  height: 33px;
}
.ic-moon {
  width: 29px;
  height: 29px;
}
.ic-bell {
  width: 28px;
  height: 28px;
}
.ic-lowbat {
  width: 33px;
  height: 16px;
}
.mirror {
  grid-column: span 2;
  gap: 12px;
  border-radius: 18px;
}
.mirror svg {
  width: 34px;
  height: 24px;
}
.mirror span {
  font-size: 11.500px;
  color: #dcdcdf;
}
.slider {
  position: relative;
  grid-row: span 2;
  overflow: hidden;
  color: #b2b2b6;
}
.slider-fill {
  position: absolute;
  left: 0;
  right: 0;
  bottom: 0;
  background-color: #fff;
}
.slider-sun {
  position: absolute;
  left: 50%;
  bottom: 16px;
  width: 26px;
  height: 26px;
  margin-left: -13px;
}
.slider-vol {
  position: absolute;
  left: 50%;
  bottom: 19px;
  width: 29px;
  height: 20px;
  margin-left: -12px;
}
.slider-mute {
  position: absolute;
  left: 50%;
  bottom: 19px;
  width: 26px;
  height: 26px;
  margin-left: -13px;
}

/* iPhone body */
.iphone {
  position: relative;
  width: 378px;
  height: 767px;
  margin: 16px 0 0 29px;
  padding: 22px 21.500px;
  border-radius: 60px;
  background-color: #000;
  box-shadow:
    inset 0 0 0 2px #2e2e2e,
    inset 0 0 0 5px #8d8d8d,
    inset 0 0 0 8px #333,
    inset 0 0 0 11px #4c4c4c,
    inset 0 0 0 14px #1c1c1c,
    0 8px 12px rgba(0, 0, 0, 0.1);
}
.side {
  position: absolute;
  width: 4px;
  background-color: #555;
}
.side-mute {
  left: -3.500px;
  top: 105px;
  height: 27px;
}
.side-up {
  left: -3.500px;
  top: 159px;
  height: 53px;
}
.side-down {
  left: -3.500px;
  top: 229px;
  height: 53px;
}
.side-power {
  right: -2.500px;
  top: 177px;
  height: 87px;
}
.seam {
  position: absolute;
  background-color: #3a3a3a;
}
.seam-top {
  top: 0;
  left: 301px;
  width: 4px;
  height: 9px;
}
.seam-bottom {
  bottom: 0;
  left: 73px;
  width: 4px;
  height: 9px;
}
.seam-lt,
.seam-rt,
.seam-lb,
.seam-rb {
  width: 9px;
  height: 4px;
}
.seam-lt {
  left: 0;
  top: 75px;
}
.seam-rt {
  right: 0;
  top: 75px;
}
.seam-lb {
  left: 0;
  top: 690px;
}
.seam-rb {
  right: 0;
  top: 690px;
}
.phone-screen {
  position: relative;
  height: 100%;
  overflow: hidden;
  border-radius: 38px;
}
.notch {
  position: absolute;
  z-index: 2;
  top: 0;
  left: 74px;
  width: 185px;
  height: 27px;
  background-color: #000;
  border-radius: 0 0 16px 16px;
  display: flex;
  align-items: center;
  justify-content: flex-end;
  gap: 14px;
  padding: 0 46px 18px 0;
}
.speaker {
  width: 45px;
  height: 5px;
  border-radius: 3px;
  background-color: #1f1f1f;
}
.lens {
  width: 8px;
  height: 8px;
  border-radius: 50%;
  background: radial-gradient(circle, #27357a 0, #0c1030 70%);
}
.home-bar {
  position: absolute;
  left: 108px;
  bottom: 8px;
  width: 118px;
  height: 4px;
  border-radius: 2px;
  background-color: #000;
}
.phone-cc {
  padding: 75px 24px 0;
  background-color: #e0e1e4;
}
.phone-status {
  justify-content: space-between;
  margin: 0 8px 0 5px;
  background: none;
  box-shadow: none;
}
.phone-status-l,
.phone-status-r {
  display: flex;
  align-items: center;
  gap: 10px;
  background-color: rgba(0, 0, 0, 0.02);
  box-shadow: 0 0 14px 10px rgba(0, 0, 0, 0.02);
}
.phone-status-r {
  gap: 4px;
}
.signal {
  width: 18px;
  height: 10px;
}
.cc-grid-phone {
  grid-template-columns: repeat(4, 60.800px);
  grid-auto-rows: 60.800px;
  gap: 14.100px;
  margin-top: 23px;
}
.cc-grid-phone > * {
  background-color: #707070;
}
.cc-grid-phone .conn {
  grid-template-columns: 48px 48px;
  gap: 14px;
}
.cc-grid-phone .round {
  height: 48px;
}
.cc-grid-phone .round-off {
  background-color: #8e8e8e;
}
.cc-grid-phone .mirror {
  padding-right: 2px;
}
.media-phone {
  padding-top: 25px;
}
.media-phone .airplay {
  top: 10px;
  right: 9px;
}
.media-phone .media-ctl {
  margin-top: 36px;
  padding: 0 13px;
}

/* settings screen on the iPad */
.screen-split {
  height: 100%;
  display: flex;
  background-color: #efeff4;
}
.master {
  width: 336px;
  border-right: 1px solid #cfcfd4;
  display: flex;
  flex-direction: column;
  overflow: hidden;
}
.detail {
  flex: 1;
  display: flex;
  flex-direction: column;
  overflow: hidden;
}
.nav {
  flex: none;
  height: 63px;
  border-bottom: 1px solid #d8d8dc;
  background-color: #fafafc;
  position: relative;
  z-index: 1;
}
.nav-status {
  display: flex;
  align-items: center;
  gap: 10px;
  height: 18px;
  padding: 0 6px;
  font-size: 11px;
  color: #222;
}
.nav-status-r {
  justify-content: flex-end;
  gap: 3px;
}
.nav-status-r .st-wifi {
  width: 14px;
  height: 14px;
}
.nav-status-r .st-lock {
  width: 11px;
  height: 11px;
}
.nav-status-r .st-moon {
  width: 12px;
  height: 12px;
}
.nav-status-r .st-loc {
  width: 10px;
  height: 10px;
}
.batt-dark i {
  background-color: #000;
}
.batt-dark {
  border-color: #888;
}
.nav-bar {
  display: flex;
  align-items: center;
  justify-content: center;
  position: relative;
  height: 36px;
  margin-top: 3px;
}
.nav-title {
  font-size: 15px;
  font-weight: 500;
  color: #1c1c1e;
}
.back {
  position: absolute;
  left: 11px;
  top: 9px;
  display: flex;
  align-items: center;
  gap: 4px;
  font-size: 15px;
  line-height: 20px;
  color: #3a85d8;
}
.back svg {
  width: 12px;
  height: 21px;
  fill: none;
  stroke: #2f7fe0;
  stroke-width: 2.400;
}
.master-list {
  flex: 1;
  padding-top: 27px;
}
.group {
  background-color: #fff;
  border-top: 1px solid #e2e2e7;
  margin-bottom: 30.500px;
}
.item {
  display: flex;
  align-items: center;
  height: 40.200px;
  padding-left: 14px;
  gap: 13px;
}
.item-label {
  flex: 1;
  align-self: stretch;
  display: flex;
  align-items: center;
  font-size: 15.300px;
  word-spacing: -2px;
  white-space: pre;
  border-bottom: 1px solid #e5e5ea;
}
.item:last-child .item-label {
  border-bottom: 0;
}
.item-active {
  background-color: #4c9dff;
}
.item-active .item-label {
  color: #d4e6ff;
  border-bottom: 0;
}
.app {
  flex: none;
  width: 26px;
  height: 26px;
  border-radius: 6px;
  display: flex;
  align-items: center;
  justify-content: center;
  color: #fff;
}
.app svg {
  width: 20px;
  height: 20px;
}
.app .app-lg {
  width: 22px;
  height: 22px;
}
.app .app-full {
  width: 26px;
  height: 26px;
}
.app .app-moon {
  width: 19px;
  height: 19px;
}
.aa {
  font-size: 16px;
  font-weight: 600;
  line-height: 1;
}
.aa small {
  font-size: 11px;
  margin-right: 1px;
}
.aa-thin {
  font-weight: 400;
}
.aa-thin small {
  font-size: 13px;
}
.c-notif {
  background-color: #f2442f;
}
.c-pink {
  background-color: #f72f55;
}
.c-indigo {
  background-color: #5856d6;
}
.c-gray {
  background-color: #8e8e93;
}
.c-blue {
  background-color: #0a7aff;
}
.c-dock {
  background-color: #1c3fc4;
}
.c-sky {
  background-color: #4da9d9;
}
.c-siri {
  background: radial-gradient(circle, #4b3fa0 0, #27245c 55%, #0b0e1c 100%);
}
.c-green {
  background-color: #35c75a;
}
.c-dark {
  background-color: #3c3c3e;
}
.c-red {
  background-color: #ff3b30;
}
.c-yellow {
  background-color: #ffcc0a;
}
.c-orange {
  background-color: #ff9500;
}

/* customize list, iPad and iPhone */
.detail-list {
  flex: 1;
  padding: 0 18.500px 0 17px;
}
.card {
  background-color: #fff;
  border-radius: 10px;
  overflow: hidden;
}
.card-clip {
  margin-top: -22.500px;
  border-radius: 0 0 10px 10px;
}
.row {
  display: flex;
  align-items: center;
  height: 40.150px;
  margin-left: 11px;
  padding: 0 15.500px 0 4px;
  gap: 11px;
  border-bottom: 1px solid #e5e5ea;
}
.row:last-child {
  border-bottom: 0;
}
.row-label {
  flex: 1;
  font-size: 15.300px;
  line-height: 20px;
  margin-left: -1px;
  white-space: nowrap;
}
.row-label.latin {
  font-size: 14.600px;
}
.ctl {
  flex: none;
  width: 19px;
  height: 19px;
  border-radius: 50%;
}
.ctl-add {
  background:
    linear-gradient(#fff, #fff) center / 11px 2px no-repeat,
    linear-gradient(#fff, #fff) center / 2px 11px no-repeat,
    #34c15a;
}
.ctl-del {
  background:
    linear-gradient(#fff, #fff) center / 10px 2px no-repeat,
    #f93a30;
}
.grip {
  width: 20px;
  height: 11px;
  border-top: 1px solid #d0d0d4;
  border-bottom: 1px solid #d0d0d4;
  background: linear-gradient(#d0d0d4, #d0d0d4) center / 100% 1px no-repeat;
}
.more {
  margin: 0;
  height: 50px;
  padding: 29px 0 0 14.500px;
  font-size: 11.500px;
  font-weight: 400;
  line-height: 14px;
  color: #8a8a8e;
}

/* settings screen on the iPhone */
.phone-settings {
  display: flex;
  flex-direction: column;
  background-color: #f2f2f7;
}
.nav-phone {
  height: 79px;
  background-color: #fdf8f6;
  border-bottom-color: #dcdcdf;
}
.phone-bar {
  display: flex;
  align-items: center;
  justify-content: space-between;
  height: 41px;
  padding: 0 15px 0 17.500px;
}
.phone-time {
  display: flex;
  align-items: center;
  gap: 3px;
  font-size: 13.500px;
  font-weight: 500;
}
.phone-icons {
  display: flex;
  align-items: center;
  gap: 3px;
}
.phone-icons .signal {
  width: 16px;
  height: 11px;
}
.phone-icons .batt {
  width: 20px;
}
.nav-phone .nav-bar {
  margin-top: -2px;
}
.nav-phone .back {
  left: 7px;
  top: 10px;
}
.detail-list-phone {
  padding: 0;
}
.detail-list-phone .card {
  border-radius: 0;
}
.detail-list-phone .card-clip {
  margin-top: -29.500px;
}
.detail-list-phone .row {
  height: 40px;
  margin-left: 8.500px;
  padding: 0 15.500px 0 7px;
}
.detail-list-phone .more {
  padding-left: 14.500px;
  background-color: #eeeef3;
}
```
